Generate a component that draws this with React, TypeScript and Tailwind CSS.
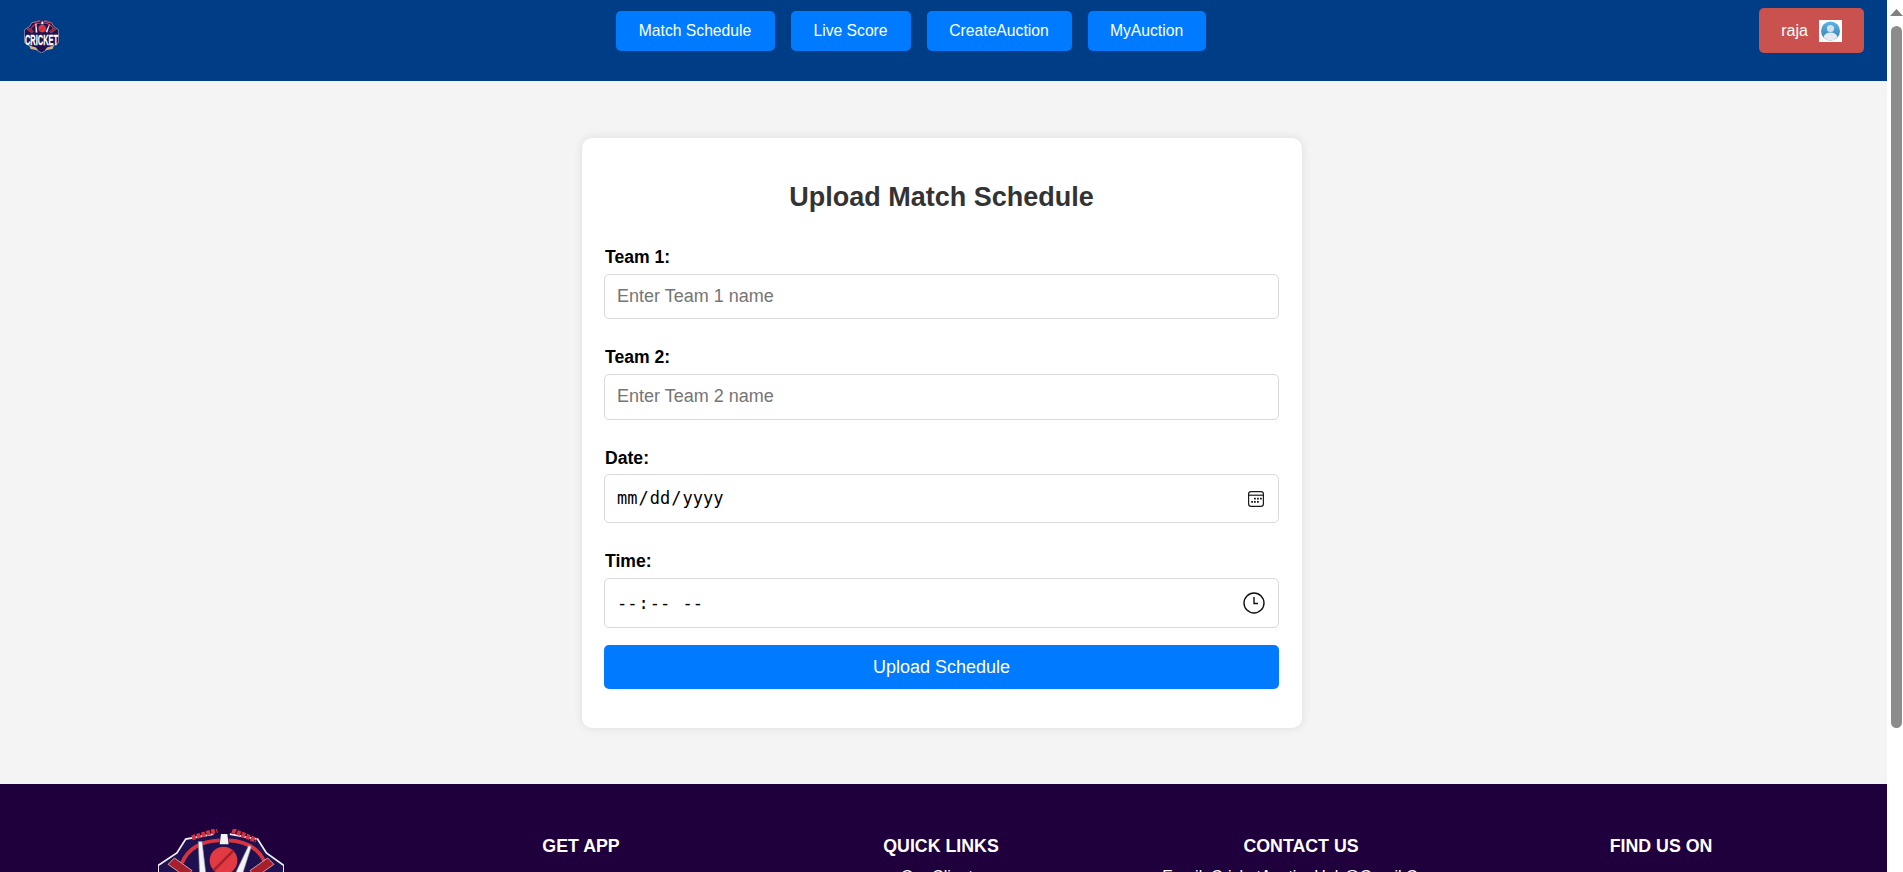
function Logo({ className }: { className: string }) {
  return (
    <svg viewBox="0 0 100 96" className={className}>
      {/* shield */}
      <path d="M44 4 L22 8 L15 19 L0 29 L1 66 L50 96 L99 66 L100 29 L86 19 L79 8 L57 4" fill="#1f1150" stroke="#f1f0f7" strokeWidth="1.4" />
      <path d="M19 27 Q26 10 49 9 M56 9 Q78 10 85 27" fill="none" stroke="#d8343f" strokeWidth="3" />
      <path d="M27 7 L47 1 M59 1 L78 9" fill="none" stroke="#d8343f" strokeWidth="4" strokeDasharray="3 1" />
      {/* stumps and bails */}
      <path d="M50 4 H55 L56 12 H49 Z" fill="#f3f3f6" />
      <path d="M32 10 L35 10 L38 36 L33 36 Z" fill="#f3f3f6" stroke="#8d8d9c" strokeWidth="0.5" />
      <path d="M72 13 L74 14 L67 36 L62 34 Z" fill="#f3f3f6" stroke="#8d8d9c" strokeWidth="0.5" />
      {/* ball */}
      <circle cx="52" cy="25" r="11" fill="#e13a42" />
      <path d="M44 33 L60 17" stroke="#a81f2c" strokeWidth="2" />
      {/* bats */}
      <path d="M8 28 L13 23 L27 33 L22 38 Z" fill="#a81f2c" stroke="#f1c9cc" strokeWidth="0.6" />
      <path d="M92 28 L87 23 L73 33 L78 38 Z" fill="#a81f2c" stroke="#f1c9cc" strokeWidth="0.6" />
      <path d="M14 74 L34 80 L40 88 L18 84 Z" fill="#d9b48a" />
      <path d="M86 74 L66 80 L60 88 L82 84 Z" fill="#d9b48a" />
      <text x="50" y="72" textAnchor="middle" textLength="96" lengthAdjust="spacingAndGlyphs" fill="#ffffff" fontFamily="'Liberation Sans', sans-serif" fontWeight="700" fontSize="40" stroke="#ffffff" strokeWidth="0.8">
        CRICKET
      </text>
    </svg>
  );
}

function Avatar() {
  return (
    <svg viewBox="0 0 23 22" className="w-[23px] h-[22px] block">
      <defs>
        <linearGradient id="av" x1="0" y1="0" x2="0" y2="1">
          <stop offset="0" stopColor="#5fb4e0" />
          <stop offset="1" stopColor="#2f7fb8" />
        </linearGradient>
      </defs>
      <rect width="23" height="22" fill="#ffffff" />
      <circle cx="11.5" cy="11" r="9.5" fill="url(#av)" />
      <circle cx="11.5" cy="8.5" r="3.6" fill="#cfe3ef" />
      <path d="M4.5 17 Q6 12.5 11.5 12.5 Q17 12.5 18.5 17 Q15.5 20.5 11.5 20.5 Q7.5 20.5 4.5 17 Z" fill="#e6eaee" />
    </svg>
  );
}

function CalendarIcon() {
  return (
    <svg viewBox="0 0 16 16" className="absolute right-[15px] top-[17px] w-[16px] h-[16px] pointer-events-none">
      <rect x="0.6" y="0.6" width="14.8" height="14.8" rx="2.4" fill="none" stroke="#1a1a1a" strokeWidth="1.2" />
      <path d="M1 4.2 H15" stroke="#1a1a1a" strokeWidth="1.2" />
      <path d="M6 6.8 h1.8 v1.8 h-1.8 z M9 6.8 h1.8 v1.8 h-1.8 z M12 6.8 h1.8 v1.8 h-1.8 z M3.2 10 h1.8 v1.8 h-1.8 z M6 10 h1.8 v1.8 h-1.8 z M9 10 h1.8 v1.8 h-1.8 z" fill="#1a1a1a" />
    </svg>
  );
}

function ClockIcon() {
  return (
    <svg viewBox="0 0 22 22" className="absolute right-[14px] top-[14px] w-[22px] h-[22px] pointer-events-none">
      <circle cx="11" cy="11" r="10" fill="none" stroke="#111111" strokeWidth="1.4" />
      <path d="M11 5 V11.5 H15" fill="none" stroke="#111111" strokeWidth="1.4" />
    </svg>
  );
}

const navItems = [
  { label: "Match Schedule", width: "w-[159px]" },
  { label: "Live Score", width: "w-[120px]" },
  { label: "CreateAuction", width: "w-[145px]" },
  { label: "MyAuction", width: "w-[118px]" },
];

function Field({ label, className, children }: any) {
  return (
    <div className={className}>
      <label className="block h-[20px] leading-[20px] mb-[7px] pl-[1px] text-[17.6px] font-bold text-black">{label}</label>
      {children}
    </div>
  );
}

const inputCls = "block w-full border border-[#d9d9d9] rounded-[5px] bg-white outline-none placeholder:text-[#757575]";
const textCls = "px-[12px] pb-[1px] text-[18px]";
const monoCls = "pl-[11px] pr-[12px] pt-[1px] font-['DejaVu_Sans_Mono',monospace] text-[17px] [&::-webkit-calendar-picker-indicator]:opacity-0";

export default function App() {
  return (
    <div className="h-screen flex overflow-hidden font-['Liberation_Sans',Arial,sans-serif]">
      <div className="flex-1 min-w-0 flex flex-col bg-[#f4f4f4]">
        <header className="h-[81px] shrink-0 bg-[#003d87] flex items-start justify-between pl-[24px] pr-[23px]">
          <div className="w-[38px] pt-[20px]">
            <Logo className="w-[35px] h-[33px] block" />
          </div>
          <nav className="flex gap-[16px] pt-[11px]">
            {navItems.map((item) => (
              <a key={item.label} className={`${item.width} h-[40px] flex items-center justify-center bg-[#007bff] text-white text-[15.7px] rounded-[5px]`}>
                {item.label}
              </a>
            ))}
          </nav>
          <div className="mt-[8px] w-[105px] h-[45px] flex items-center justify-center gap-[11px] bg-[#c9524f] text-white text-[16px] rounded-[5px]">
            raja
            <Avatar />
          </div>
        </header>

        <main className="h-[703px] shrink-0 pt-[57px] pr-[3px]">
          <div className="w-[720px] h-[590px] mx-auto bg-white rounded-[10px] shadow-[0_0_10px_rgba(0,0,0,0.1)] pl-[22px] pr-[23px] pt-[34px]">
            <h1 className="text-center text-[27px] leading-[50px] font-bold text-[#333333]">Upload Match Schedule</h1>
            <form>
              <Field label="Team 1:" className="mt-[25px]">
                <input className={`${inputCls} ${textCls} h-[45px]`} placeholder="Enter Team 1 name" />
              </Field>
              <Field label="Team 2:" className="mt-[28px]">
                <input className={`${inputCls} ${textCls} h-[46px]`} placeholder="Enter Team 2 name" />
              </Field>
              <Field label="Date:" className="mt-[28px]">
                <div className="relative -mt-[1px]">
                  <input type="date" className={`${inputCls} ${monoCls} h-[49px]`} />
                  <CalendarIcon />
                </div>
              </Field>
              <Field label="Time:" className="mt-[28px]">
                <div className="relative">
                  <input type="time" className={`${inputCls} ${monoCls} h-[50px]`} />
                  <ClockIcon />
                </div>
              </Field>
              <button type="button" className="mt-[17px] w-full h-[44px] bg-[#007bff] text-white text-[18px] rounded-[5px]">
                Upload Schedule
              </button>
            </form>
          </div>
        </main>

        <footer className="flex-1 bg-[#1f003d] text-white pl-[41px] pr-[46px] pt-[45px] grid grid-cols-5 text-center">
          <div className="flex justify-center">
            <Logo className="w-[126px] h-[121px] block" />
          </div>
          <h3 className="text-[17.8px] font-bold leading-[20px] mt-[7px]">GET APP</h3>
          <div className="mt-[7px]">
            <h3 className="text-[17.8px] font-bold leading-[20px]">QUICK LINKS</h3>
            <p className="mt-[11px] text-[16px] leading-[20px]">Our Clients</p>
          </div>
          <div className="mt-[7px]">
            <h3 className="text-[17.8px] font-bold leading-[20px]">CONTACT US</h3>
            <p className="mt-[11px] text-[16px] leading-[20px]">Email: CricketAuctionHub@Gmail.Com</p>
          </div>
          <h3 className="text-[17.8px] font-bold leading-[20px] mt-[7px]">FIND US ON</h3>
        </footer>
      </div>

      {/* window scrollbar */}
      <div className="w-[16px] shrink-0 bg-white pt-[9px] pl-[3px]">
        <svg viewBox="0 0 13 7" className="w-[13px] h-[7px] block">
          <path d="M6.5 0 L13 7 H0 Z" fill="#808080" />
        </svg>
        <div className="mt-[10px] ml-[1px] w-[11px] h-[702px] rounded-full bg-[#8c8c8c]" />
      </div>
    </div>
  );
}
